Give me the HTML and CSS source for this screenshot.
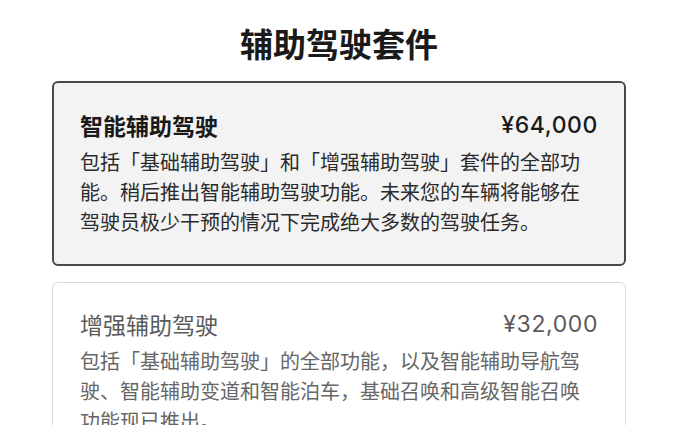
FILE: index.html
```html
<!DOCTYPE html>
<html lang="zh-CN">
<head>
  <meta charset="UTF-8">
  <meta name="viewport" content="width=device-width, initial-scale=1.0">
  <title>辅助驾驶套件</title>
  <link rel="stylesheet" href="styles.css">
</head>
<body>

  <div class="suite">
    <h1 class="suite-title">辅助驾驶套件</h1>

    <!-- selected package -->
    <div class="package selected">
      <div class="package-head">
        <div class="package-name">智能辅助驾驶</div>
        <div class="package-price">¥64,000</div>
      </div>
      <p class="package-desc">包括「基础辅助驾驶」和「增强辅助驾驶」套件的全部功能。稍后推出智能辅助驾驶功能。未来您的车辆将能够在驾驶员极少干预的情况下完成绝大多数的驾驶任务。</p>
    </div>

    <div class="package">
      <div class="package-head">
        <div class="package-name">增强辅助驾驶</div>
        <div class="package-price">¥32,000</div>
      </div>
      <p class="package-desc">包括「基础辅助驾驶」的全部功能，以及智能辅助导航驾驶、智能辅助变道和智能泊车，基础召唤和高级智能召唤功能现已推出。</p>
    </div>
  </div>

</body>
</html>
```

FILE: styles.css
```css
body, html {
  margin: 0;
  padding: 0;
  background: #fff;
  font-family: "Noto Sans CJK SC", "Noto Sans", sans-serif;
  overflow: hidden;
}

.suite {
  width: 574px;
  margin-left: 52px;
  padding-top: 22px;
}

.suite-title {
  margin: 0 0 16px;
  font-size: 33px;
  line-height: 43px;
  font-weight: 700;
  text-align: center;
  color: #1a1a1a;
}

.package {
  border: 1px solid #d9d9d9;
  border-radius: 6px;
  padding: 25px 27px 26px;
  margin-bottom: 16px;
  background: #fff;
}

.package.selected {
  border: 2px solid #4a4a4a;
  padding: 26px 26px 27px;
  background: #f3f3f3;
}

.package-head {
  display: flex;
  justify-content: space-between;
  align-items: center;
  font-size: 23px;
  line-height: 32px;
  color: #5a5a5a;
}

.package-price {
  font-family: Inter, "Noto Sans", sans-serif;
  font-size: 23px;
  letter-spacing: 0.6px;
}

.selected .package-head {
  color: #1a1a1a;
  font-weight: 600;
}

.selected .package-price {
  font-weight: 500;
}

.package-desc {
  margin: 6px 0 0;
  font-size: 20px;
  line-height: 30px;
  color: #666;
}

.selected .package-desc {
  color: #2b2b2b;
}
```
